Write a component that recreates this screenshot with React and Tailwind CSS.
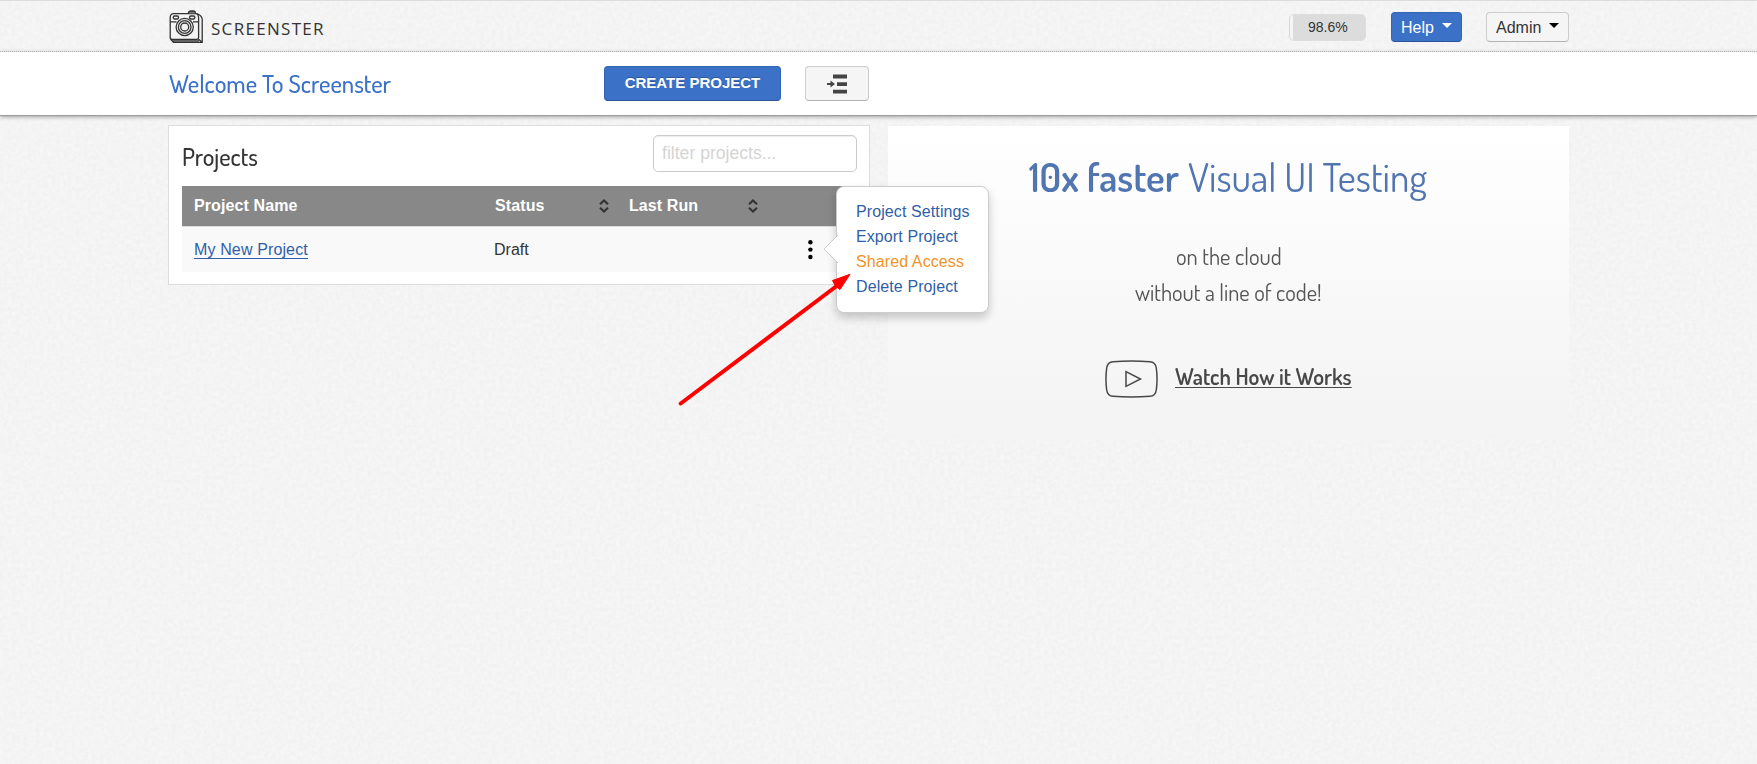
import { useLayoutEffect, useRef, useState } from "react";

// Condenses its text horizontally so that it fills the given width.
function Condensed({ width, className = "", children }) {
  const ref = useRef(null);
  const [scale, setScale] = useState(1);
  useLayoutEffect(() => {
    setScale(width / ref.current.offsetWidth);
  }, [width]);
  return (
    <span className="inline-block whitespace-nowrap" style={{ width }}>
      <span
        ref={ref}
        className={`inline-block origin-left font-['Dosis','Lato',sans-serif] ${className}`}
        style={{ transform: `scaleX(${scale})` }}
      >
        {children}
      </span>
    </span>
  );
}

function Paper() {
  return (
    <svg className="absolute inset-0 h-full w-full" aria-hidden="true">
      <filter id="paper" x="0" y="0" width="100%" height="100%" colorInterpolationFilters="sRGB">
        <feTurbulence type="fractalNoise" baseFrequency="0.25" numOctaves="2" seed="4" stitchTiles="stitch" />
        <feColorMatrix values="0.038 0 0 0 0.937  0.038 0 0 0 0.937  0.038 0 0 0 0.937  0 0 0 0 1" />
      </filter>
      <rect width="100%" height="100%" filter="url(#paper)" />
    </svg>
  );
}

function Camera() {
  return (
    <svg className="mt-[9px] h-[34px] w-[35px]" viewBox="0 0 35 34" fill="none" stroke="#333" strokeWidth="1.3">
      <path d="M1.2 7.5Q1.5 3.6 4.5 3.6H27Q29.5 4 29.6 8V27.5Q29.6 29.3 28 29.3H3Q1.2 29.3 1.2 27.5Z" />
      <path d="M1.5 29L4.5 32.3H33.2V9Q32.5 5 27.5 3.6M29.3 29L33 32.2M1.5 11.8H7.5M24 11.8H29.5M3 30.8H30" />
      <path d="M19.5 3.4V2.2Q20 1 22 1H25Q26.5 1.2 26.5 3.4" fill="#777" />
      <rect x="4.2" y="6" width="5.4" height="3" rx="1.4" />
      <rect x="20.5" y="6" width="5.4" height="3" rx="1.4" />
      <circle cx="15.7" cy="17" r="8.6" fill="#f3f3f3" />
      <circle cx="15.7" cy="17" r="6.3" />
      <circle cx="15.7" cy="17" r="4" />
    </svg>
  );
}

function Caret({ className }) {
  return (
    <svg className={`h-[5px] w-[10px] ${className}`} viewBox="0 0 10 5">
      <path d="M0 0H10L5 5Z" fill="currentColor" />
    </svg>
  );
}

function Sort() {
  return (
    <svg className="h-[14px] w-[10px]" viewBox="0 0 10 14" fill="none" stroke="#333" strokeWidth="2.1">
      <path d="M1 5.3L5 1.5L9 5.3M1 8.7L5 12.5L9 8.7" />
    </svg>
  );
}

export default function App() {
  return (
    <div className="relative h-[764px] w-full overflow-hidden bg-[#f3f3f3] font-['Liberation_Sans',Arial,sans-serif] text-base text-[#333]">
      <Paper />
      <div className="relative">
        <header className="flex h-[52px] border-b border-dotted border-[#c4c4c4] pt-px pl-[169px] shadow-[inset_0_1px_0_#dcdcdc]">
          <div className="flex w-[1120px]">
            <Camera />
            <span className="mt-[15px] ml-[7px] font-['Open_Sans',sans-serif] text-[17px] leading-[26px] font-medium tracking-[1.3px]">SCREENSTER</span>
          </div>
          <div className="mt-[13px] h-[27px] w-[77px] rounded-[5px] border border-[#dedede] border-l-[#d8d8d8] bg-[linear-gradient(to_right,#f5f5f5_3px,#dcdcdc_3px)] pl-[18px] text-sm leading-[25px]">98.6%</div>
          <button className="mt-[11px] ml-[25px] flex h-[30px] w-[71px] rounded-[4px] border border-[#3465b3] border-b-[#2a5599] bg-[#3c71c8] pl-[9px] leading-[29px] text-white">
            Help
            <Caret className="mt-[10px] ml-[8px]" />
          </button>
          <button className="mt-[11px] ml-[24px] flex h-[30px] w-[83px] rounded-[4px] border border-[#ccc] border-b-[#b3b3b3] bg-[#f5f5f5] pl-[9px] leading-[29px]">
            Admin
            <Caret className="mt-[10px] ml-[8px] text-black" />
          </button>
        </header>

        <div className="relative flex h-[64px] border-b border-[#999e9c] bg-white pl-[169px] shadow-[0_1px_4px_rgba(0,0,0,0.35)]">
          <h1 className="mt-[13px] w-[435px] text-[25px] leading-[36px] text-[#3c71c8]">
            <Condensed width={222} className="font-medium">Welcome To Screenster</Condensed>
          </h1>
          <button className="mt-[14px] h-[35px] w-[177px] rounded-[4px] border border-[#3465b3] border-b-[#2a5599] bg-[#3c71c8] pb-[2px] text-[15px] leading-[31px] font-bold text-white [text-shadow:0_-1px_0_rgba(0,0,0,0.25)]">CREATE PROJECT</button>
          <button className="mt-[14px] ml-[24px] flex h-[35px] w-[64px] items-center justify-center rounded-[4px] border border-[#ccc] border-b-[#b3b3b3] bg-[#f5f5f5]">
            <svg className="h-[20px] w-[22px]" viewBox="0 0 22 20" fill="#444">
              <path d="M7 .5H21V4.5H7ZM11 8.2H21V12H11ZM7 15.7H21V19.5H7ZM1 9H4.5V6.6L9 10L4.5 13.4V11H1Z" />
            </svg>
          </button>
        </div>

        <main className="flex items-start pt-[9px] pl-[168px]">
          <section className="h-[160px] w-[702px] border border-[#ddd] bg-white pr-[12px] pl-[13px]">
            <div className="flex h-[60px] justify-between">
              <h2 className="mt-[12px] text-[25px] leading-[36px]">
                <Condensed width={76} className="font-medium">Projects</Condensed>
              </h2>
              <input
                className="mt-[9px] h-[37px] w-[204px] rounded-[5px] border border-[#ccc] pb-px pl-[8px] text-[17.6px] shadow-[inset_0_1px_1px_rgba(0,0,0,0.075)] placeholder:text-[#d4d4d4]"
                placeholder="filter projects..."
              />
            </div>
            <div className="w-[675px]">
              <div className="flex h-[40px] bg-[#888] pl-[12px] leading-[39px] font-bold tracking-[0.1px] text-white">
                <span className="w-[301px]">Project Name</span>
                <span className="flex h-[39px] w-[134px] items-center">
                  <span className="w-[104px]">Status</span>
                  <Sort />
                </span>
                <span className="flex h-[39px] items-center">
                  <span className="w-[119px]">Last Run</span>
                  <Sort />
                </span>
              </div>
              <div className="flex h-[46px] border-t border-[#ddd] bg-[#f9f9f9] pl-[12px] leading-[46px]">
                <span className="w-[300px] tracking-[0.13px]">
                  <a className="border-b border-[#2f5fa8] text-[#2f5fa8]">My New Project</a>
                </span>
                <span className="w-[313px]">Draft</span>
                <svg className="mt-[12px] h-[22px] w-[6px]" viewBox="0 0 6 22">
                  <circle cx="3.4" cy="3.3" r="2.2" />
                  <circle cx="3.4" cy="10.6" r="2.2" />
                  <circle cx="3.4" cy="18" r="2.2" />
                </svg>
              </div>
            </div>
          </section>

          <section className="mt-px ml-[18px] flex h-[313px] w-[681px] flex-col items-center bg-gradient-to-b from-white to-[#f3f3f3]">
            <div className="mt-[22px] flex h-[56px] pr-px text-[40px] leading-[56px] text-[#5075b0]">
              <Condensed width={150} className="font-semibold">10x faster</Condensed>
              <span className="w-[9px]" />
              <Condensed width={239}>Visual UI Testing</Condensed>
            </div>
            <p className="mt-[34px] h-[36px] text-[23px] leading-[36px] text-[#555]">
              <Condensed width={106}>on the cloud</Condensed>
            </p>
            <p className="h-[36px] text-[23px] leading-[36px] text-[#555]">
              <Condensed width={187}>without a line of code!</Condensed>
            </p>
            <div className="mt-[50px] flex pr-px">
              <svg className="h-[38px] w-[53px]" viewBox="0 0 53 38" fill="none" stroke="#484848" strokeWidth="1.5">
                <path d="M8 1.7Q26.5 .4 45 1.7Q50.5 2 51.3 8Q52.8 19 51.3 30Q50.5 36 45 36.3Q26.5 37.8 8 36.3Q2.5 36 1.7 30Q.2 19 1.7 8Q2.5 2 8 1.7Z" />
                <path d="M21 11.7L35.5 19L21 26.3Z" />
              </svg>
              <a className="-mt-[2px] ml-[17px] text-[23px] leading-[35px] text-[#484848]">
                <Condensed width={177} className="font-semibold underline decoration-1 underline-offset-2 [text-decoration-skip-ink:none]">Watch How it Works</Condensed>
              </a>
            </div>
          </section>
        </main>
      </div>

      <div className="absolute top-[186px] left-[836px] h-[127px] w-[153px] rounded-[8px] border border-[#ccc] bg-white pt-[12px] pl-[19px] leading-[25px] tracking-[0.1px] text-[#2f5fa8] shadow-[0_5px_10px_rgba(0,0,0,0.2)]">
        <svg className="absolute top-[48px] -left-[14px] h-[28px] w-[15px]" viewBox="0 0 15 28">
          <path d="M15 0L1 14L15 28" fill="#fff" stroke="#ccc" />
        </svg>
        <div className="whitespace-nowrap">Project Settings</div>
        <div>Export Project</div>
        <div className="text-[#ef9425]">Shared Access</div>
        <div>Delete Project</div>
      </div>

      <svg className="absolute top-[268px] left-[674px] h-[142px] w-[182px]" viewBox="0 0 182 142">
        <path d="M6.7 135.5L162 18.5" stroke="#f00" strokeWidth="4" strokeLinecap="round" />
        <path d="M176 6.3L158.5 12.5L161.5 18L166 21.5Z" fill="#f00" stroke="#f00" />
      </svg>
    </div>
  );
}
